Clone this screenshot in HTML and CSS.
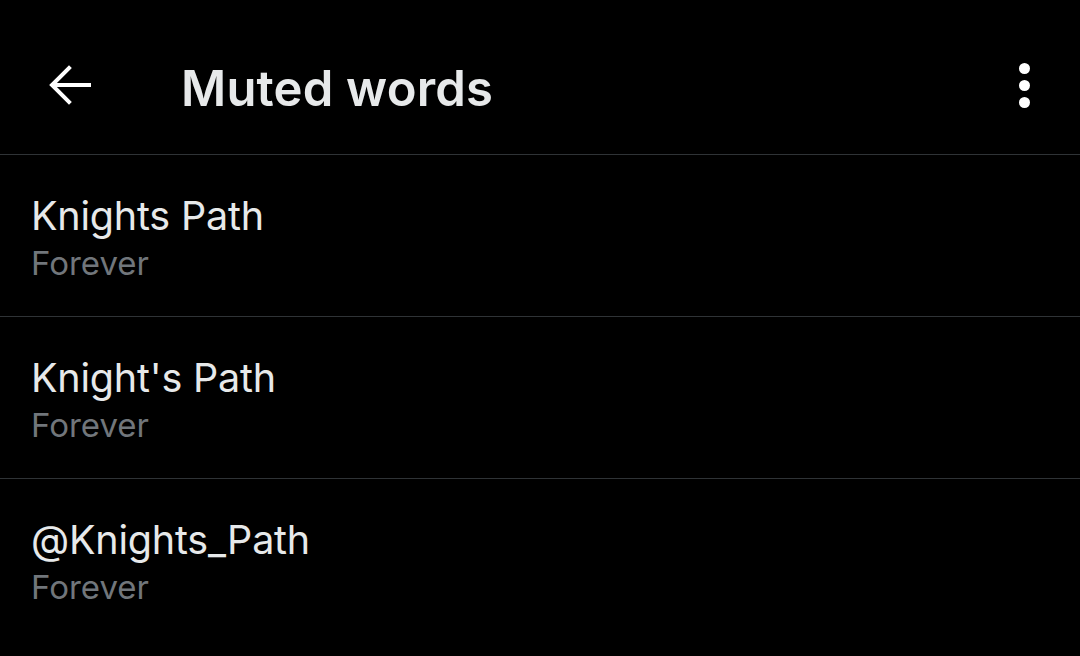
FILE: index.html
```html
<!DOCTYPE html>
<html lang="en">
<head>
    <meta charset="UTF-8">
    <meta name="viewport" content="width=device-width, initial-scale=1.0">
    <title>Muted words</title>
    <link rel="stylesheet" href="styles.css">
</head>
<body>
    <div class="screen">
        <div class="top-bar">
            <div class="icon-btn back-btn" aria-label="Back">
                <svg width="44" height="44" viewBox="0 0 44 44" fill="none" stroke="currentColor" stroke-width="4" stroke-linecap="square">
                    <path d="M41 22H6M21 5L4 22l17 17"/>
                </svg>
            </div>
            <div class="top-bar-title">Muted words</div>
            <div class="icon-btn more-btn" aria-label="More">
                <span class="dot"></span>
                <span class="dot"></span>
                <span class="dot"></span>
            </div>
        </div>

        <div class="muted-list">
            <!-- muted entries -->
            <div class="muted-item">
                <div class="muted-word">Knights Path</div>
                <div class="muted-duration">Forever</div>
            </div>
            <div class="muted-item">
                <div class="muted-word">Knight's Path</div>
                <div class="muted-duration">Forever</div>
            </div>
            <div class="muted-item">
                <div class="muted-word">@Knights_Path</div>
                <div class="muted-duration">Forever</div>
            </div>
        </div>
    </div>
</body>
</html>
```

FILE: styles.css
```css
:root {
    --background-color: #000000;
    --border-color: #2f3336;
    --text-primary: #e7e9ea;
    --text-secondary: #71767b;
}

* {
    margin: 0;
    padding: 0;
    box-sizing: border-box;
    font-family: "Inter", "Noto Sans", sans-serif;
}

body {
    height: 100vh;
    background: var(--background-color);
    color: var(--text-primary);
    overflow: hidden;
}

.screen {
    display: flex;
    flex-direction: column;
    width: 1080px;
}

.top-bar {
    height: 155px;
    display: flex;
    align-items: center;
    padding: 0 50px 0 48px;
    border-bottom: 1px solid var(--border-color);
}

.icon-btn {
    color: #ffffff;
    display: flex;
    align-items: center;
    justify-content: center;
}

.back-btn {
    width: 44px;
    height: 44px;
    margin-top: 16px;
}

.top-bar-title {
    flex: 1;
    margin-left: 89px;
    margin-top: 22px;
    font-size: 49px;
    font-weight: 600;
    letter-spacing: 0.2px;
    color: var(--text-primary);
}

.more-btn {
    flex-direction: column;
    gap: 6px;
    width: 11px;
    margin-top: 16px;
}

.dot {
    width: 11px;
    height: 11px;
    border-radius: 50%;
    background: #ffffff;
}

.muted-item {
    height: 162px;
    padding: 36px 31px 0;
    border-bottom: 1px solid var(--border-color);
}

.muted-item:last-child {
    border-bottom: none;
}

.muted-word {
    font-size: 39.5px;
    line-height: 50px;
    letter-spacing: -0.2px;
    color: var(--text-primary);
}

.muted-duration {
    font-size: 33px;
    line-height: 44px;
    color: var(--text-secondary);
}
```
